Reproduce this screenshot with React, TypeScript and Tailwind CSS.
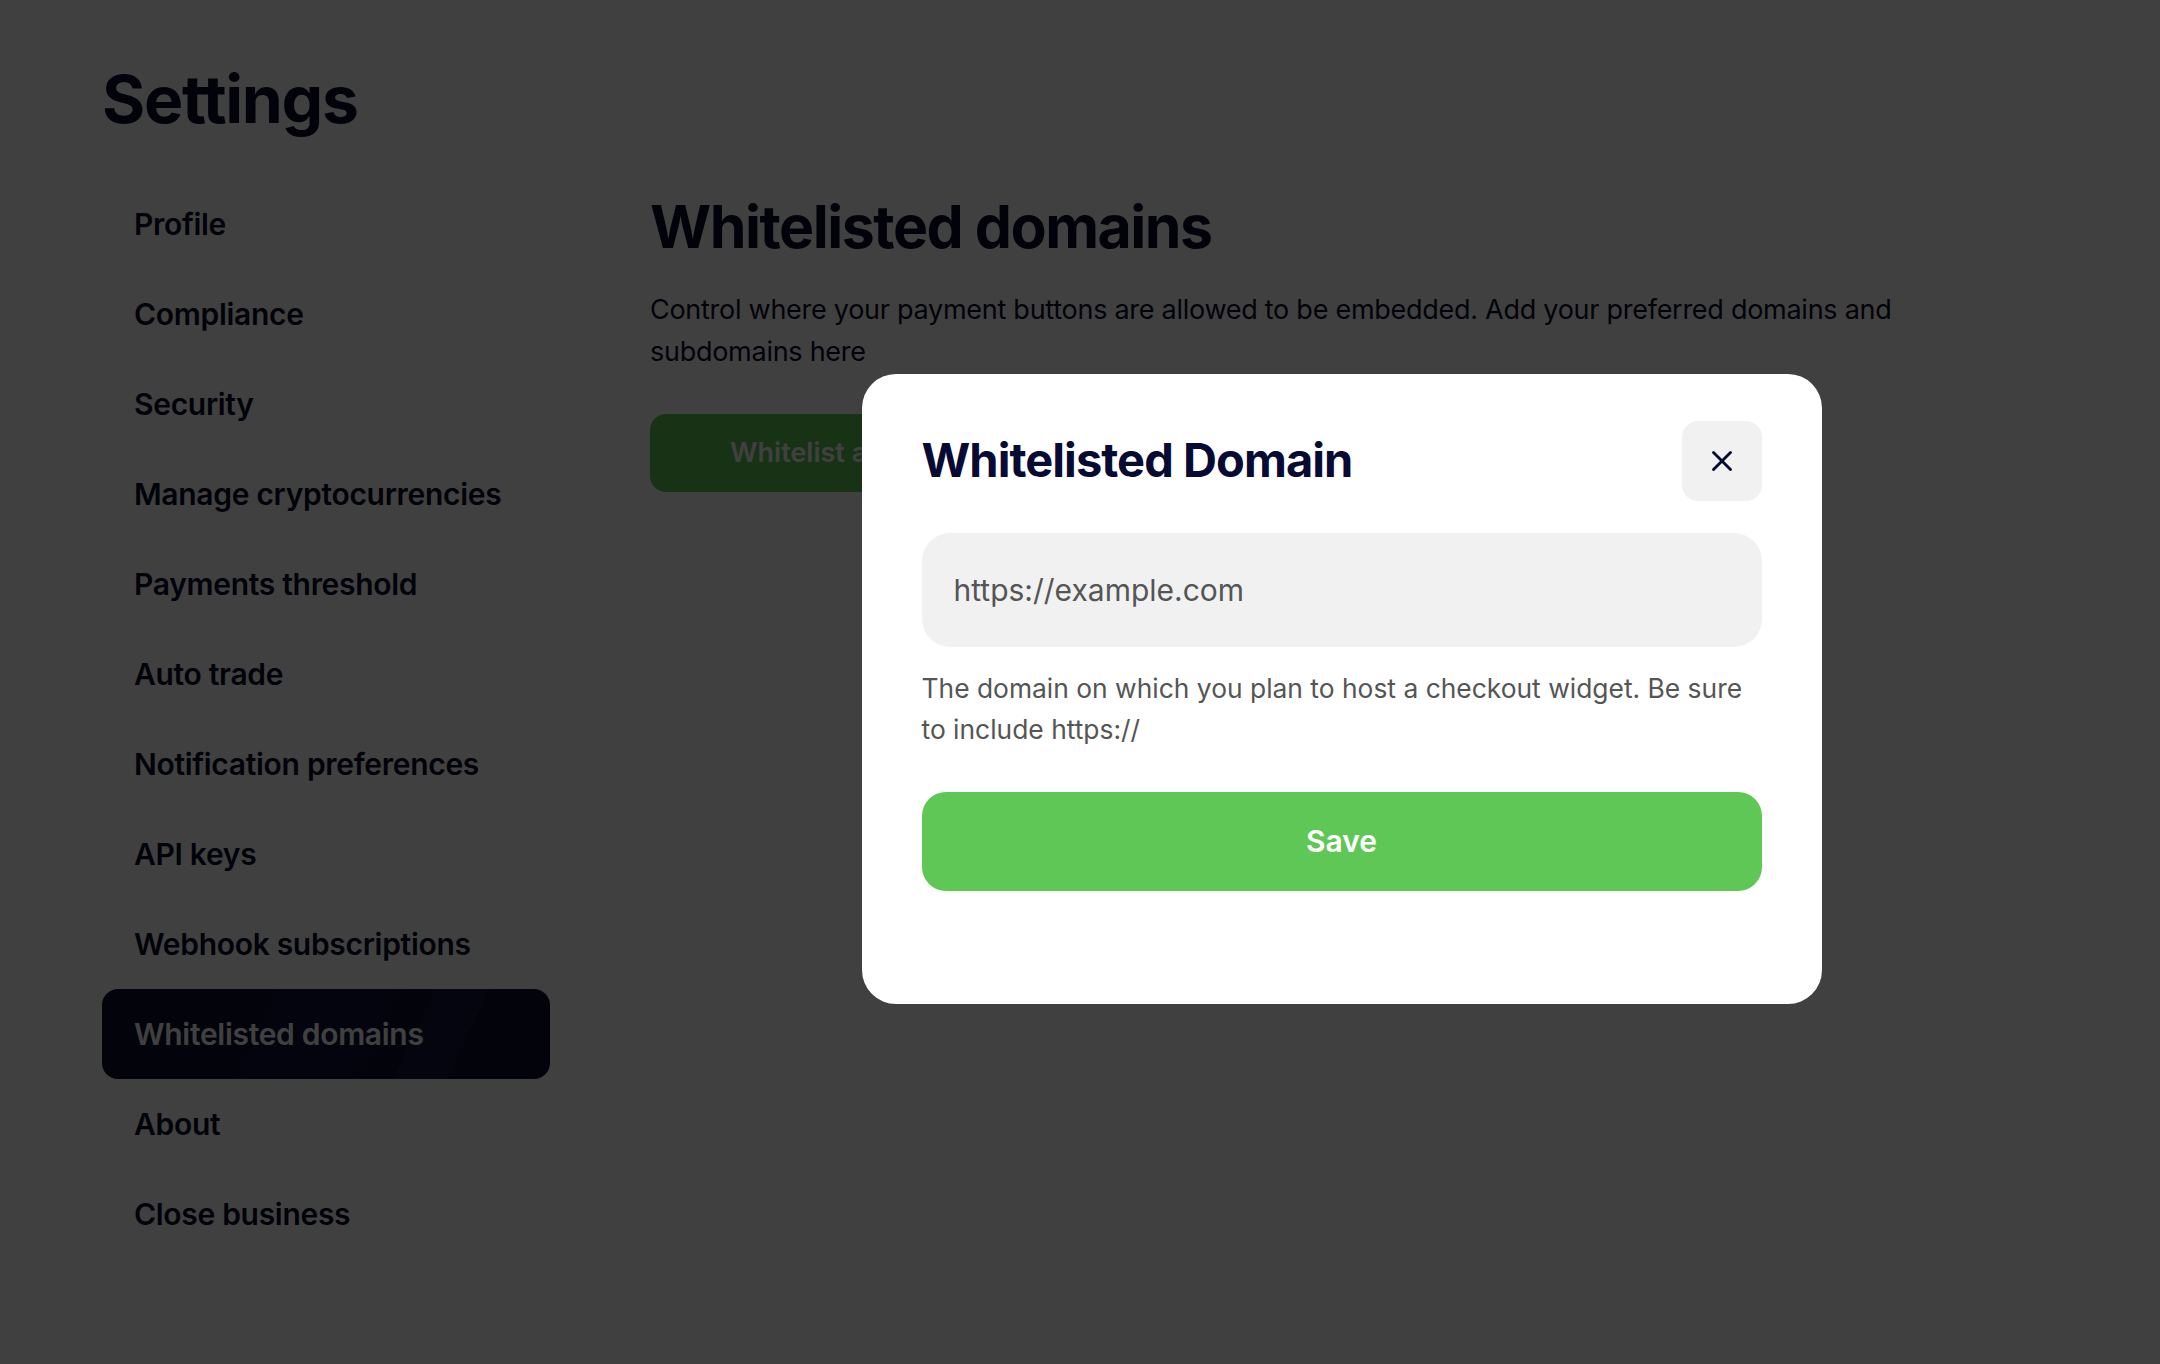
import { X } from "lucide-react";

const NAV = [
  "Profile",
  "Compliance",
  "Security",
  "Manage cryptocurrencies",
  "Payments threshold",
  "Auto trade",
  "Notification preferences",
  "API keys",
  "Webhook subscriptions",
  "Whitelisted domains",
  "About",
  "Close business",
];

const font = { fontFamily: "Inter, 'Noto Sans', sans-serif" };

export default function App() {
  return (
    <div className="relative min-h-[1364px] w-full bg-white text-[#0a0b2e]" style={font}>
      <div className="px-[102px] pt-[59px]">
        <h1 className="text-[66px] font-bold leading-[80px] tracking-[-0.02em]">Settings</h1>

        <div className="mt-[40px] flex gap-[100px]">
          {/* Sidebar */}
          <nav className="flex w-[448px] flex-col">
            {NAV.map((item) => {
              const active = item === "Whitelisted domains";
              return (
                <div
                  key={item}
                  className={
                    active
                      ? "flex h-[90px] items-center rounded-[16px] bg-[linear-gradient(115deg,#0b0c2e_0%,#0b0c2e_28%,#11133a_45%,#0d0f33_62%,#0b0c2e_67%,#0b0c2e_68%,#15173f_68%,#15173f_79%,#0b0c2e_79%)] pl-[32px] text-[30px] font-semibold tracking-[-0.01em] text-white"
                      : "flex h-[90px] items-center pl-[32px] text-[30px] font-semibold tracking-[-0.01em]"
                  }
                >
                  {item}
                </div>
              );
            })}
          </nav>

          {/* Main */}
          <main className="flex-1 pt-[8px]">
            <h2 className="text-[59px] font-bold leading-[80px] tracking-[-0.025em]">Whitelisted domains</h2>
            <p className="mt-[22px] max-w-[1280px] text-[27px] leading-[42px] tracking-[-0.01em]">
              Control where your payment buttons are allowed to be embedded. Add your preferred domains and
              subdomains here
            </p>
            <button className="mt-[41px] h-[78px] rounded-[16px] bg-[#5fc756] px-[80px] text-[27px] font-semibold text-white">
              Whitelist a domain
            </button>
          </main>
        </div>
      </div>

      {/* Overlay */}
      <div className="fixed inset-0 bg-black/75" />

      {/* Modal */}
      <div className="fixed inset-0 flex items-center justify-center pl-[523px] pt-[13px]">
        <div className="w-[960px] rounded-[34px] bg-white px-[60px] pb-[113px] pt-[47px]">
          <div className="flex items-center justify-between">
            <h3 className="text-[47px] font-bold tracking-[-0.02em] text-[#070a33]">Whitelisted Domain</h3>
            <button className="flex h-[80px] w-[80px] items-center justify-center rounded-[16px] bg-[#f1f1f1] text-[#070a33]">
              <X size={34} strokeWidth={2} />
            </button>
          </div>
          <input
            className="mt-[32px] h-[114px] w-full rounded-[28px] bg-[#f1f1f1] px-[32px] text-[30px] text-[#333] outline-none placeholder:text-[#555]"
            placeholder="https://example.com"
          />
          <p className="mt-[21px] text-[26.4px] leading-[41px] text-[#555]">
            The domain on which you plan to host a checkout widget. Be sure to include https://
          </p>
          <button className="mt-[42px] h-[99px] w-full rounded-[24px] bg-[#5fc756] text-[30px] font-semibold text-white">
            Save
          </button>
        </div>
      </div>
    </div>
  );
}
